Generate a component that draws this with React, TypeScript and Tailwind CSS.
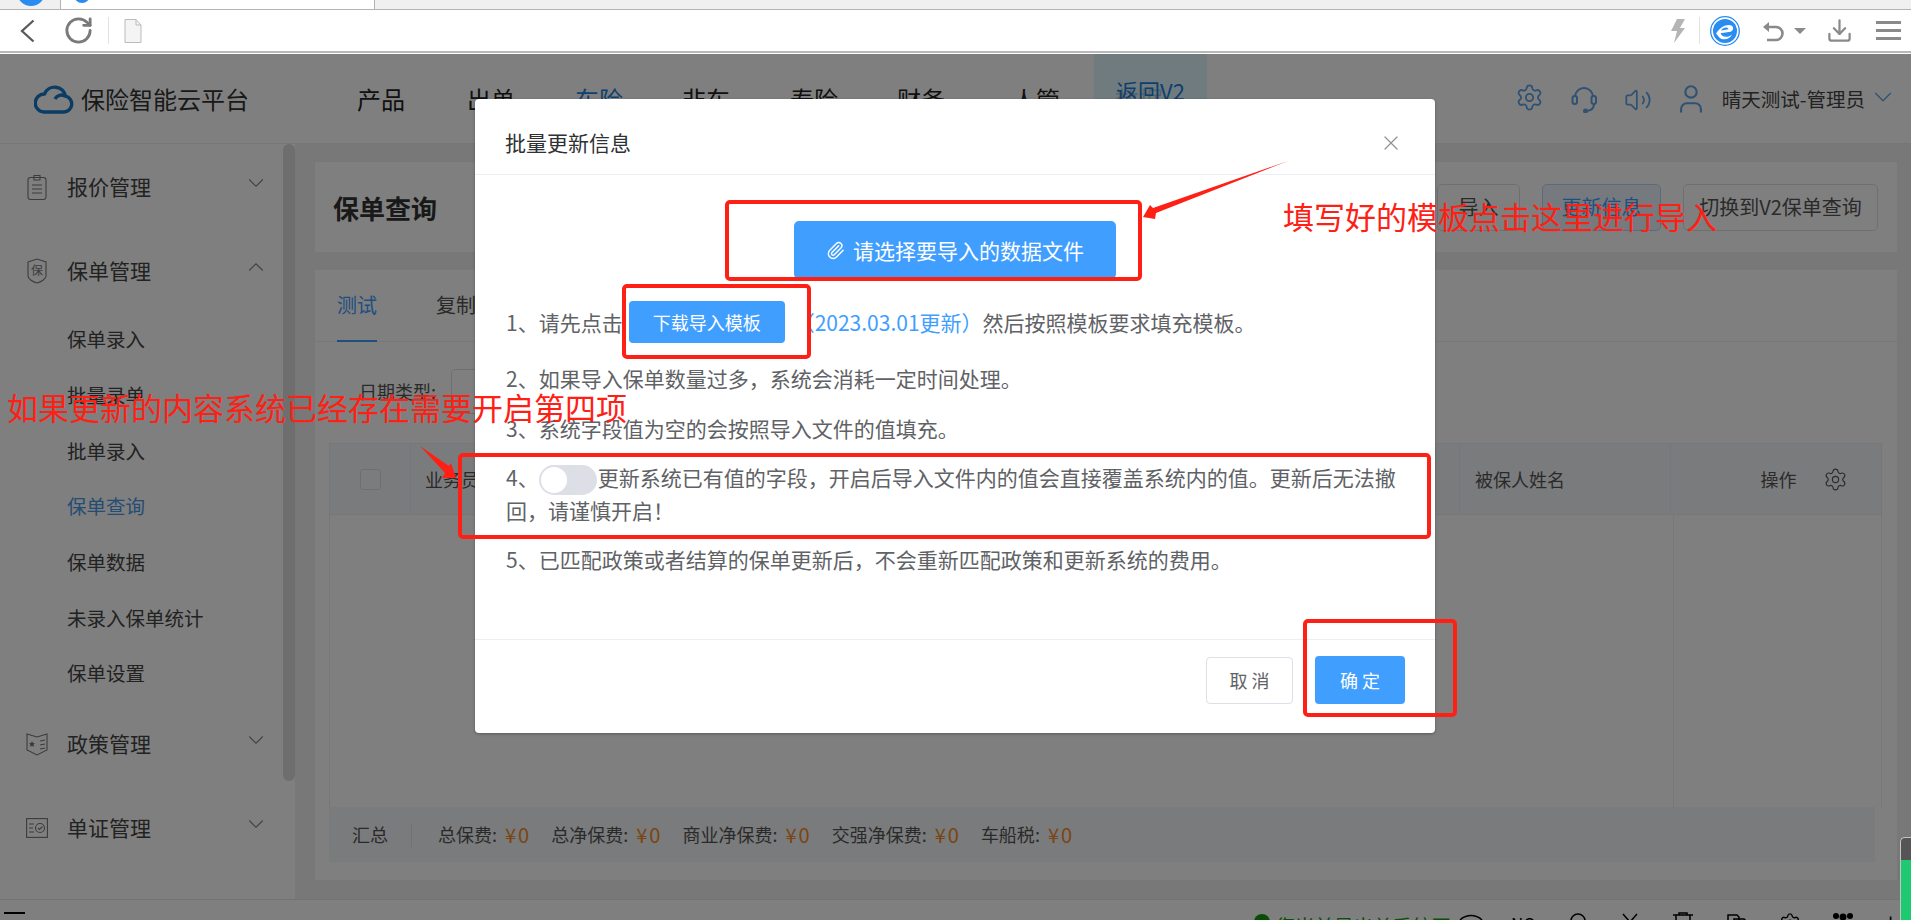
import React from "react";
import { ChevronDown, ChevronUp, Paperclip, X, Settings, Volume2, User, Download, RotateCw } from "lucide-react";

const Cloud = () => (
  <svg width="40" height="31" viewBox="0 0 40 31" fill="none" stroke="#1478c8" strokeWidth="3.4">
    <path d="M10 29h20a8 8 0 0 0 1.5-15.8 a11 11 0 0 0-21-2.2 A9 9 0 0 0 10 29z" strokeLinejoin="round" />
    <path d="M21 16a7 7 0 0 1 10-3" />
  </svg>
);
const Headset = () => (
  <svg width="26" height="26" viewBox="0 0 26 26" fill="none" stroke="#5ea3e6" strokeWidth="2">
    <path d="M4 10a9 9 0 0 1 18 0" />
    <rect x="1.500" y="9" width="4.500" height="8" rx="2.200" />
    <rect x="20.500" y="9" width="4.500" height="8" rx="2.200" />
    <path d="M23 17c0 4-3 6.500-7 7" />
    <circle cx="14.500" cy="24" r="1.500" fill="#5ea3e6" />
  </svg>
);
const Bolt = () => (
  <svg width="14" height="24" viewBox="0 0 14 24" fill="#b5b5b5">
    <path d="M6 0h8L9 9h5L3 24l3-12H0z" />
  </svg>
);
const IeLogo = () => (
  <svg width="30" height="30" viewBox="0 0 30 30" fill="none">
    <circle cx="15" cy="15" r="14.300" stroke="#2a8cf0" strokeWidth="1.300" />
    <circle cx="15" cy="15" r="12" fill="#2a8cf0" />
    <path d="M6 17.500 C10 11 17 7.500 21.500 9.500 C24 11 23.500 14.500 20.500 15.800 L10.500 17.300 C12 21.500 18 22 22 18.500 C20 24 11.500 25 8.500 20.500 M11 14.500 L18.500 13.300 C18 10.800 13.500 11 11 14.500Z" fill="#fff" />
  </svg>
);
const UndoIcon = () => (
  <svg width="22" height="22" viewBox="0 0 22 22" fill="none" stroke="#8a8a8a" strokeWidth="2.600">
    <path d="M6 7h8a6 6 0 0 1 0 13H5" />
    <path d="M1 7l6-5v10z" fill="#8a8a8a" stroke="none" />
  </svg>
);
const DocIcon = () => (
  <svg width="18" height="24" viewBox="0 0 18 24" fill="#f4f4f4" stroke="#bbb">
    <path d="M1 .500h11l5 5.500v17.500H1z" />
    <path d="M12 .500V6h5" fill="none" />
  </svg>
);
const BackIcon = () => (
  <svg width="15" height="24" viewBox="0 0 15 24" fill="none" stroke="#5a5a5a" strokeWidth="2.300">
    <path d="M13.500 1.500L2 12l11.500 10.500" />
  </svg>
);
const ClipIcon = () => (
  <svg width="20" height="26" viewBox="0 0 20 26" fill="none" stroke="#777" strokeWidth="1.100">
    <rect x="1" y="3.500" width="18" height="22" rx="2.500" />
    <path d="M7 3.500V1.500h6v2M7 3.500h6v2.500H7z" />
    <path d="M5 11h10M5 15h10M5 19h10" />
  </svg>
);
const ShieldIcon = () => (
  <svg width="20" height="26" viewBox="0 0 20 26" fill="none" stroke="#777" strokeWidth="1.100">
    <path d="M1 4l9-3 9 3v14c0 3-5 6-9 7-4-1-9-4-9-7z" />
    <text x="10" y="16.500" textAnchor="middle" fontSize="12" fill="#777" stroke="none" fontFamily="Noto Sans CJK SC">保</text>
  </svg>
);
const BookIcon = () => (
  <svg width="22" height="24" viewBox="0 0 22 24" fill="none" stroke="#777" strokeWidth="1.100">
    <path d="M1 2l10 3 10-3v16l-10 5-10-5z" />
    <path d="M14 9l5-1M14 13l5-1M14 17l5-1" />
    <path d="M6 9l1 2 2 .300-1.500 1.500.400 2L6 14l-1.900.800.400-2L3 11.300 5 11z" fill="#777" stroke="none" />
  </svg>
);
const CertIcon = () => (
  <svg width="22" height="20" viewBox="0 0 22 20" fill="none" stroke="#777" strokeWidth="1.100">
    <rect x=".600" y=".600" width="20.800" height="18.800" />
    <path d="M3 6h5M3 10h4M3 14h5" />
    <circle cx="14" cy="10" r="4.500" />
    <path d="M12 10l1.500 1.500L16.500 8.500" />
  </svg>
);

function TopChrome() {
  return (
    <div className="h-[54px] shrink-0 bg-white flex flex-col">
      <div className="h-[10px] bg-[#f0f0f0] border-b border-[#b4b4b4] flex overflow-hidden">
        <div className="w-[61px] shrink-0 border-r border-[#b4b4b4] flex justify-center pl-[1px]">
          <span className="w-[28px] h-[28px] rounded-full bg-[#2a8cf0] -mt-[22px]" />
        </div>
        <div className="w-[314px] shrink-0 bg-white pl-[13px] border-r border-[#b4b4b4] -mb-px">
          <span className="block w-[16px] h-[16px] rounded-full bg-[#2a8cf0] -mt-[13px]" />
        </div>
      </div>
      <div className="h-[41px] flex items-center">
        <div className="ml-[20px]"><BackIcon /></div>
        <div className="ml-[28px]"><RotateCw size={31} strokeWidth={2.200} color="#7a7a7a" /></div>
        <div className="ml-[14px] h-[27px] w-px bg-[#e2e2e2]" />
        <div className="ml-[15px]"><DocIcon /></div>
        <div className="flex-1" />
        <Bolt />
        <div className="ml-[14px] h-[27px] w-px bg-[#e2e2e2]" />
        <div className="ml-[10px] mt-[1px]"><IeLogo /></div>
        <div className="ml-[22px]"><UndoIcon /></div>
        <div className="ml-[10px] w-0 h-0 border-x-[6px] border-x-transparent border-t-[6px] border-t-[#8a8a8a]" />
        <div className="ml-[20px]"><Download size={27} strokeWidth={2} color="#8a8a8a" /></div>
        <div className="ml-[23px] mr-[10px] w-[25px] flex flex-col gap-[5px]">
          <span className="h-[3px] bg-[#8a8a8a]" />
          <span className="h-[3px] bg-[#8a8a8a]" />
          <span className="h-[3px] bg-[#8a8a8a]" />
        </div>
      </div>
      <div className="h-[3px] border-t-2 border-[#b8b8b8] bg-white" />
    </div>
  );
}

const navItems = [
  { t: "产品", w: "w-[110px]" },
  { t: "出单", w: "w-[108px]" },
  { t: "车险", w: "w-[107px]", blue: true },
  { t: "非车", w: "w-[108px]" },
  { t: "寿险", w: "w-[107px]" },
  { t: "财务", w: "w-[115px]" },
  { t: "人管", w: "w-[103px]" },
  { t: "数据", w: "w-[60px]" },
];

function Header() {
  return (
    <header className="h-[90px] shrink-0 bg-white border-b border-[#ececec] flex items-center relative">
      <div className="ml-[34px] w-[47px]"><Cloud /></div>
      <span className="text-[24px] text-[#333] whitespace-nowrap w-[276px]">保险智能云平台</span>
      <nav className="flex text-[24px] text-[#222] whitespace-nowrap">
        {navItems.map((n) => (
          <span key={n.t} className={n.w + (n.blue ? " text-[#1d83dc]" : "")}>{n.t}</span>
        ))}
      </nav>
      <div className="absolute left-[1094px] top-0 w-[113px] h-[70px] bg-[#d6f4ff]/80 text-[#1d7fd8] text-[22px] text-center pt-[20px] leading-[32px]">返回V2</div>
      <div className="ml-auto flex items-center mr-[13px] text-[#5ea3e6]">
        <Settings size={29} strokeWidth={1.500} className="-mt-[2px]" />
        <div className="ml-[27px] mt-[2px]"><Headset /></div>
        <div className="ml-[27px] mt-[2px]"><Volume2 size={28} strokeWidth={1.500} /></div>
        <div className="ml-[22px]"><User size={34} strokeWidth={1.500} /></div>
        <span className="ml-[14px] text-[19.500px] text-[#444] whitespace-nowrap">晴天测试-管理员</span>
        <ChevronDown size={30} strokeWidth={1.000} className="ml-[3px] -mt-[3px]" />
      </div>
    </header>
  );
}

function Parent({ icon, label, open }: { icon: React.ReactNode; label: string; open?: boolean }) {
  return (
    <div className="h-[84px] flex items-center shrink-0">
      <div className="w-[67px] flex justify-center pl-[7px]">{icon}</div>
      <span className="text-[21px] text-[#444]">{label}</span>
      <div className="ml-auto mr-[14px] -mt-[8px] text-[#888]">
        {open ? <ChevronUp size={26} strokeWidth={1.000} /> : <ChevronDown size={26} strokeWidth={1.000} />}
      </div>
    </div>
  );
}

const subs = ["保单录入", "批量录单", "批单录入", "保单查询", "保单数据", "未录入保单统计", "保单设置"];

function Sidebar() {
  return (
    <aside className="w-[295px] shrink-0 bg-white flex">
      <div className="w-[283px] pt-[1px] flex flex-col">
        <Parent icon={<ClipIcon />} label="报价管理" />
        <Parent icon={<ShieldIcon />} label="保单管理" open />
        <div className="-mt-[2px] mb-[1px]">
          {subs.map((s) => (
            <div key={s} className={"h-[55.7px] flex items-center pl-[67px] text-[19.500px] " + (s === "保单查询" ? "text-[#4a98e6]" : "text-[#444]")}>{s}</div>
          ))}
        </div>
        <Parent icon={<BookIcon />} label="政策管理" />
        <Parent icon={<CertIcon />} label="单证管理" />
      </div>
      <div className="w-[12px] h-[637px] rounded-full bg-[#dcdcdc]" />
    </aside>
  );
}

function Money({ label, first }: { label: string; first?: boolean }) {
  return (
    <>
      <span className={first ? "ml-[26px]" : "ml-[20px]"}>{label}:</span>
      <span className="ml-[8px] text-[#f58a26] text-[20px] tracking-[2px]">¥0</span>
    </>
  );
}

function Table() {
  return (
    <div className="ml-[14px] mr-[15px] mt-[28px] mb-[18px] flex-1 flex flex-col">
      <div className="h-[72px] bg-[#f5f7fa] flex items-center border border-[#ebeef5] text-[18px] text-[#555]">
        <div className="w-[81px] h-full flex items-center justify-center border-r border-[#ebeef5] shrink-0">
          <span className="w-[21px] h-[21px] rounded-[3px] border border-[#dcdfe6] bg-white/30" />
        </div>
        <span className="ml-[14px]">业务员</span>
        <div className="ml-auto w-[422px] h-full flex items-center border-l border-[#ebeef5] pl-[15px] shrink-0">
          <span className="w-[195px]">被保人姓名</span>
          <div className="h-full border-l border-[#ebeef5] flex items-center w-[212px]">
            <span className="ml-[90px]">操作</span>
            <Settings size={25} strokeWidth={1.100} className="ml-[26px]" />
          </div>
        </div>
      </div>
      <div className="flex-1 border-x border-[#ebeef5] flex justify-end">
        <div className="w-[208px] border-l border-[#ebeef5]" />
      </div>
      <div className="h-[55px] mr-[7px] bg-[#f5f6f8] flex items-center text-[18px] text-[#555] whitespace-nowrap">
        <span className="ml-[23px]">汇总</span>
        <span className="ml-[23px] h-[24px] w-px bg-[#e4e4e4]" />
        <Money label="总保费" first />
        <Money label="总净保费" />
        <Money label="商业净保费" />
        <Money label="交强净保费" />
        <Money label="车船税" />
      </div>
    </div>
  );
}

function Main() {
  return (
    <main className="flex-1 bg-[#f0f1f2] pl-[20px] pr-[14px] pt-[18px] pb-[19px] flex flex-col gap-[18px] min-w-0">
      <section className="h-[90px] shrink-0 bg-white flex items-center pl-[18px] pr-[19px]">
        <h1 className="text-[26px] font-bold text-[#333]">保单查询</h1>
        <div className="ml-auto flex gap-[22px] text-[20px]">
          <span className="w-[83px] h-[47px] rounded-[5px] border border-[#dcdfe6] flex items-center justify-center text-[#555]">导入</span>
          <span className="w-[119px] h-[47px] rounded-[5px] border border-[#b3d8ff] bg-[#ecf5ff] flex items-center justify-center text-[#409eff]">更新信息</span>
          <span className="w-[195px] h-[47px] rounded-[5px] border border-[#dcdfe6] flex items-center justify-center text-[#555]">切换到V2保单查询</span>
        </div>
      </section>
      <section className="flex-1 bg-white flex flex-col min-h-0">
        <div className="h-[72px] shrink-0 border-b border-[#eceef2] flex pl-[22px] items-end text-[20px]">
          <span className="h-[72px] w-[40px] flex items-center justify-center text-[#409eff] border-b-2 border-[#409eff] whitespace-nowrap -mb-px">测试</span>
          <span className="h-[72px] ml-[59px] flex items-center text-[#555]">复制</span>
        </div>
        <div className="h-[73px] shrink-0 pl-[44px] pt-[27px] flex items-start text-[18px] text-[#555]">
          <span className="mt-[9px]">日期类型:</span>
          <span className="ml-[15px] w-[160px] h-[45px] border border-[#dcdfe6] rounded-[4px]" />
        </div>
        <Table />
      </section>
    </main>
  );
}

function StatusBar() {
  return (
    <footer className="h-[21px] shrink-0 bg-white border-t border-[#e6e6e6] overflow-hidden relative flex items-start text-black">
      <span className="ml-[4px] mt-[12px] w-[21px] h-[2px] bg-black" />
      <div className="ml-auto flex items-start pt-[12px] pr-[11px]">
        <span className="w-[16px] h-[16px] rounded-full bg-[#0e9b0e] mt-[2px]" />
        <span className="ml-[6px] text-[19.500px] leading-[28px] text-[#12a012] whitespace-nowrap">您当前是出单系统网</span>
        <svg className="ml-[8px]" width="24" height="20" viewBox="0 0 24 20" fill="none" stroke="#000" strokeWidth="1.500"><path d="M1 8a16 16 0 0 1 22 0M5 12a10 10 0 0 1 14 0" /></svg>
        <span className="ml-[28px] text-[17px] leading-[24px]">NO</span>
        <svg className="ml-[32px]" width="20" height="20" viewBox="0 0 20 20" fill="none" stroke="#000" strokeWidth="1.500"><circle cx="10" cy="9" r="7" /></svg>
        <svg className="ml-[33px]" width="18" height="20" viewBox="0 0 18 20" fill="none" stroke="#000" strokeWidth="1.500"><path d="M2 2l14 16M16 2L2 18" /></svg>
        <svg className="ml-[33px]" width="22" height="20" viewBox="0 0 22 20" fill="none" stroke="#000" strokeWidth="1.500"><path d="M7 3V1h8v2M1 3h20M4 3v16h14V3" /></svg>
        <svg className="ml-[32px]" width="22" height="20" viewBox="0 0 22 20" fill="none" stroke="#000" strokeWidth="1.500"><path d="M2 3h9l2 2v14H2zM8 7h10l2 2v10H8z" /></svg>
        <Settings className="ml-[31px]" size={22} strokeWidth={1.500} />
        <svg className="ml-[31px]" width="22" height="20" viewBox="0 0 22 20" fill="#000"><circle cx="4" cy="4" r="3" /><circle cx="11" cy="5" r="3.500" /><circle cx="18" cy="4" r="3" /><rect x="6" y="9" width="10" height="9" /></svg>
        <span className="ml-[27px] text-[19px] leading-[26px]">小</span>
      </div>
    </footer>
  );
}

function Modal() {
  return (
    <div className="absolute z-20 left-[475px] top-[45px] w-[960px] h-[634px] bg-white rounded-[4px] shadow-[0_1px_3px_rgba(0,0,0,0.3)] flex flex-col text-[21px] text-[#606266]">
      <div className="h-[76px] shrink-0 border-b border-[#ebeef5] flex items-center pl-[30px] pr-[32px] pt-[12px]">
        <span className="text-[21px] text-[#303133]">批量更新信息</span>
        <X size={24} strokeWidth={1.200} color="#909399" className="ml-auto" />
      </div>
      <div className="flex-1 px-[31px] pt-[46px] leading-[33px]">
        <div className="flex justify-center">
          <div className="w-[322px] h-[58px] bg-[#409eff] rounded-[5px] flex items-center justify-center text-white">
            <Paperclip size={19} strokeWidth={1.800} className="mr-[8px]" />
            <span>请选择要导入的数据文件</span>
          </div>
        </div>
        <div className="mt-[22px] h-[42px] flex items-center whitespace-nowrap leading-[40px]">
          <span>1、请先点击</span>
          <span className="ml-[6px] w-[156px] h-[42px] bg-[#409eff] rounded-[4px] text-white text-[18px] flex items-center justify-center">下载导入模板</span>
          <span className="ml-[9px] text-[#409eff]">（2023.03.01更新）</span>
          <span>然后按照模板要求填充模板。</span>
        </div>
        <p className="mt-[19px]">2、如果导入保单数量过多，系统会消耗一定时间处理。</p>
        <p className="mt-[17px]">3、系统字段值为空的会按照导入文件的值填充。</p>
        <p className="mt-[16px]">
          4、<span className="inline-flex align-middle w-[58px] h-[30px] -my-[6px] rounded-full bg-[#dcdfe6] items-center pl-[2px] mr-[1px]"><span className="w-[26px] h-[26px] rounded-full bg-white" /></span>更新系统已有值的字段，开启后导入文件内的值会直接覆盖系统内的值。更新后无法撤回，请谨慎开启！
        </p>
        <p className="mt-[16px]">5、已匹配政策或者结算的保单更新后，不会重新匹配政策和更新系统的费用。</p>
      </div>
      <div className="h-[94px] shrink-0 border-t border-[#ebeef5] flex items-start justify-end pt-[16px] pr-[30px] gap-[22px] text-[18px]">
        <span className="w-[87px] h-[47px] mt-[1px] rounded-[4px] border border-[#dcdfe6] flex items-center justify-center text-[#606266]">取 消</span>
        <span className="w-[90px] h-[48px] rounded-[4px] bg-[#409eff] flex items-center justify-center text-white">确 定</span>
      </div>
    </div>
  );
}

function Annotations() {
  return (
    <>
      <div className="absolute z-30 left-[725px] top-[200px] w-[417px] h-[81px] border-4 border-[#ff2015] rounded-[5px]" />
      <div className="absolute z-30 left-[622px] top-[284px] w-[189px] h-[75px] border-4 border-[#ff2015] rounded-[5px]" />
      <div className="absolute z-30 left-[458px] top-[453px] w-[973px] h-[86px] border-4 border-[#ff2015] rounded-[5px]" />
      <div className="absolute z-30 left-[1303px] top-[619px] w-[154px] h-[98px] border-4 border-[#ff2015] rounded-[5px]" />
      <svg className="absolute z-30 left-0 top-0 pointer-events-none" width="1911" height="920">
        <path d="M1288 161 L1156 213 L1155 219 L1143 217 L1150 205 L1153 208 Z" fill="#ff2015" />
        <path d="M420 446 L449 466 L451 463 L456 478 L442 478 L445 473 Z" fill="#ff2015" />
      </svg>
      <div className="absolute z-30 left-[1283px] top-[193px] text-[31px] leading-[46px] text-[#ff2015] whitespace-nowrap">填写好的模板点击这里进行导入</div>
      <div className="absolute z-30 left-[7px] top-[384px] text-[31px] leading-[46px] text-[#ff2015] whitespace-nowrap">如果更新的内容系统已经存在需要开启第四项</div>
      <div className="absolute z-30 right-0 top-[837px] w-[11px] h-[83px] border-l border-t border-[#c4c4c4] rounded-tl-[5px] bg-[#555] flex flex-col justify-end">
        <div className="h-[60px] bg-[#1ec96f]" />
      </div>
    </>
  );
}

export default function App() {
  return (
    <div className="w-[1911px] h-[920px] overflow-hidden relative flex flex-col bg-white font-['Noto_Sans_CJK_SC','Noto_Sans',sans-serif]">
      <TopChrome />
      <div className="flex-1 relative flex flex-col min-h-0">
        <Header />
        <div className="flex-1 flex min-h-0">
          <Sidebar />
          <Main />
        </div>
        <StatusBar />
        <div className="absolute inset-0 z-10 bg-black/50" />
        <Modal />
      </div>
      <Annotations />
    </div>
  );
}
